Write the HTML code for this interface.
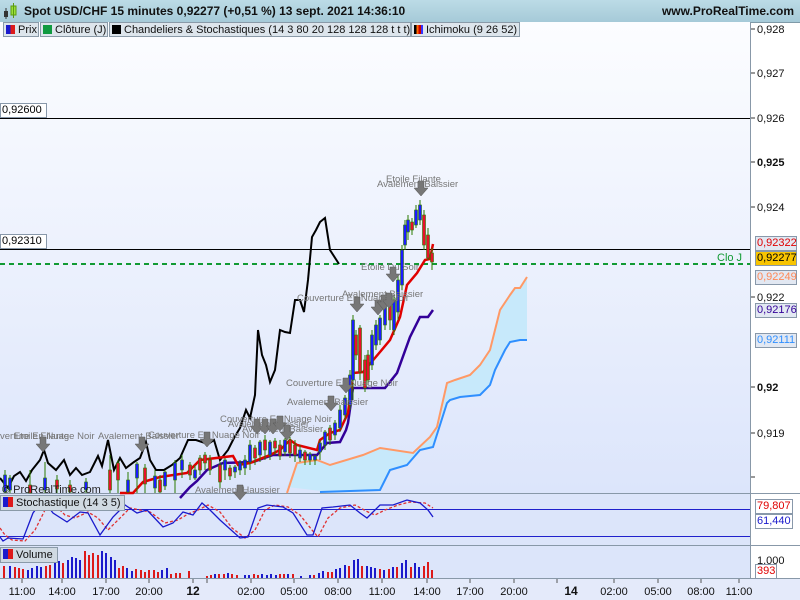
<!DOCTYPE html>
<html><head><meta charset="utf-8"><style>
body{margin:0;width:800px;height:600px;overflow:hidden;font-family:"Liberation Sans",sans-serif;background:#fff;position:relative}
.hdr{position:absolute;left:0;top:0;width:800px;height:22px;background:linear-gradient(#bcdbe6,#a6cad8);border-bottom:1px solid #7f9aa8}
.hdr .t{position:absolute;left:24px;top:4px;font-size:12px;font-weight:bold;color:#111}
.hdr .w{position:absolute;right:6px;top:4px;font-size:12px;font-weight:bold;color:#111}
.leg{position:absolute;top:22px;height:15px;background:#dde5ec;border:1px solid #8a9aa8;font-size:11px;line-height:15px;color:#111;white-space:nowrap;padding:0 3px 0 2px;box-sizing:border-box}
.sq{display:inline-block;width:9px;height:9px;vertical-align:-1px;margin-right:3px}
.bx{position:absolute;font-size:11px;line-height:13px;border:1px solid #8898aa;background:#e2e8f2;padding:0 1px;box-sizing:border-box;height:15px}
.ax{position:absolute;font-size:11px;color:#111}
</style></head><body>
<div class="hdr"><svg style="position:absolute;left:3px;top:3px" width="16" height="16"><rect x="1" y="8" width="4" height="6" fill="#333"/><line x1="3" y1="5" x2="3" y2="16" stroke="#333"/><rect x="8" y="3" width="5" height="9" fill="#9be03a" stroke="#5a9a10"/><line x1="10.5" y1="0" x2="10.5" y2="15" stroke="#5a9a10"/></svg><span class="t">Spot USD/CHF 15 minutes 0,92277 (+0,51 %) 13 sept. 2021 14:36:10</span><span class="w">www.ProRealTime.com</span></div>

<svg style="position:absolute;left:0;top:22px" width="800" height="578">
<defs><linearGradient id="bg" x1="0" y1="0" x2="0" y2="1"><stop offset="0" stop-color="#fcfdff"/><stop offset="1" stop-color="#dce5fb"/></linearGradient></defs>
<rect x="0" y="0" width="750" height="471" fill="url(#bg)"/>
<rect x="0" y="472" width="750" height="51" fill="#dce5fa"/>
<rect x="0" y="524" width="750" height="32" fill="#dce5fa"/>
<rect x="0" y="557" width="800" height="21" fill="#e4eafa"/>
<line x1="750.5" y1="0" x2="750.5" y2="557" stroke="#8898a8"/>
<line x1="0" y1="471.5" x2="800" y2="471.5" stroke="#8898a8"/>
<line x1="0" y1="523.5" x2="800" y2="523.5" stroke="#8898a8"/>
<line x1="0" y1="556.5" x2="800" y2="556.5" stroke="#8898a8"/>
</svg>

<svg style="position:absolute;left:0;top:0" width="800" height="600">
<!-- price axis ticks -->
<g stroke="#333"><line x1="751" y1="29" x2="755" y2="29"/><line x1="751" y1="73" x2="755" y2="73"/><line x1="751" y1="118" x2="755" y2="118"/><line x1="751" y1="162" x2="755" y2="162"/><line x1="751" y1="207" x2="755" y2="207"/><line x1="751" y1="297" x2="755" y2="297"/><line x1="751" y1="387" x2="755" y2="387"/><line x1="751" y1="433" x2="755" y2="433"/><line x1="751" y1="477" x2="755" y2="477"/></g>
<line x1="0" y1="118.5" x2="750" y2="118.5" stroke="#000"/>
<line x1="0" y1="249.5" x2="750" y2="249.5" stroke="#000"/>
<line x1="0" y1="264" x2="750" y2="264" stroke="#119a33" stroke-width="2" stroke-dasharray="5,4"/>
<!-- cloud -->
<polygon fill="#c7e9fb" points="287,487 297,463 317,460 330,465 363,455 380,448 413,453 430,437 437,427 447,383 455,380 470,375 480,365 490,350 495,330 500,310 510,295 515,288 520,288 527,277 527,340 520,340 510,342 505,350 500,360 495,370 490,385 480,395 460,397 450,400 447,403 433,447 420,450 407,465 390,470 380,490 330,492"/>
<polyline fill="none" stroke="#ff9966" stroke-width="2" points="287,493 297,463 317,460 330,465 363,455 380,448 413,453 430,437 437,427 447,383 455,380 470,375 480,365 490,350 495,330 500,310 510,295 515,288 520,288 527,277"/>
<polyline fill="none" stroke="#2f8fff" stroke-width="2" points="320,492 380,490 390,470 407,465 420,450 433,447 447,403 450,400 460,397 480,395 490,385 495,370 500,360 505,350 510,342 520,340 527,340"/>
<!-- black lagging -->
<polyline fill="none" stroke="#000" stroke-width="2" points="0,478 8,488 14,476 20,472 26,481 32,470 40,460 44,450 48,463 56,470 64,460 70,475 76,468 82,475 90,472 98,456 102,466 108,440 114,470 120,458 126,468 134,462 140,458 146,442 150,460 156,470 164,470 172,465 180,458 188,440 196,440 208,444 214,440 220,460 228,450 234,438 240,428 246,410 250,418 255,395 258,330 262,355 266,365 270,382 275,370 280,330 285,332 290,333 295,300 300,300 304,312 308,280 312,237 316,230 320,222 325,218 330,250 339,264"/>
<!-- purple -->
<polyline fill="none" stroke="#330099" stroke-width="2.5" points="180,498 190,487 197,481 207,470 223,463 253,462 273,455 317,455 327,443 340,442 346,430 348,423 353,388 385,388 397,373 410,337 420,317 428,317 433,310"/>
<!-- red -->
<polyline fill="none" stroke="#e00000" stroke-width="2.5" points="120,493 133,493 143,482 160,477 187,473 200,460 233,456 238,465 250,463 270,455 280,450 290,440 297,445 317,450 320,440 330,433 340,430 348,413 353,373 363,372 380,352 390,340 400,317 407,285 417,273 425,260 430,259 433,244"/>
<!-- candles -->
<g id="c" stroke="#2a7a00" stroke-width="1"></g>
<g stroke="#2a7a00">
<line x1="5" y1="470" x2="5" y2="493"/><line x1="10" y1="475" x2="10" y2="493"/><line x1="30" y1="470" x2="30" y2="493"/><line x1="45" y1="462" x2="45" y2="493"/><line x1="57" y1="475" x2="57" y2="493"/><line x1="70" y1="480" x2="70" y2="493"/><line x1="86" y1="478" x2="86" y2="493"/><line x1="110" y1="455" x2="110" y2="493"/><line x1="118" y1="460" x2="118" y2="493"/><line x1="128" y1="472" x2="128" y2="493"/><line x1="137" y1="462" x2="137" y2="493"/><line x1="145" y1="464" x2="145" y2="493"/><line x1="155" y1="470" x2="155" y2="493"/><line x1="160" y1="475" x2="160" y2="493"/><line x1="165" y1="470" x2="165" y2="490"/><line x1="175" y1="460" x2="175" y2="493"/><line x1="182" y1="455" x2="182" y2="478"/><line x1="190" y1="462" x2="190" y2="480"/><line x1="195" y1="465" x2="195" y2="480"/><line x1="200" y1="455" x2="200" y2="475"/><line x1="205" y1="452" x2="205" y2="470"/><line x1="210" y1="455" x2="210" y2="475"/><line x1="220" y1="462" x2="220" y2="488"/><line x1="225" y1="458" x2="225" y2="480"/><line x1="230" y1="465" x2="230" y2="480"/><line x1="235" y1="465" x2="235" y2="478"/><line x1="240" y1="460" x2="240" y2="475"/><line x1="245" y1="455" x2="245" y2="475"/><line x1="250" y1="440" x2="250" y2="470"/><line x1="255" y1="445" x2="255" y2="465"/><line x1="260" y1="440" x2="260" y2="462"/><line x1="265" y1="435" x2="265" y2="460"/><line x1="270" y1="440" x2="270" y2="460"/><line x1="275" y1="438" x2="275" y2="455"/><line x1="280" y1="440" x2="280" y2="460"/><line x1="285" y1="438" x2="285" y2="456"/><line x1="290" y1="437" x2="290" y2="458"/><line x1="295" y1="440" x2="295" y2="462"/><line x1="300" y1="445" x2="300" y2="462"/><line x1="305" y1="450" x2="305" y2="465"/><line x1="310" y1="452" x2="310" y2="465"/><line x1="315" y1="455" x2="315" y2="465"/><line x1="320" y1="440" x2="320" y2="460"/><line x1="325" y1="430" x2="325" y2="450"/><line x1="330" y1="425" x2="330" y2="445"/><line x1="335" y1="420" x2="335" y2="440"/><line x1="340" y1="405" x2="340" y2="432"/><line x1="345" y1="395" x2="345" y2="420"/><line x1="350" y1="370" x2="350" y2="410"/><line x1="353" y1="315" x2="353" y2="400"/><line x1="356" y1="330" x2="356" y2="360"/><line x1="360" y1="325" x2="360" y2="380"/><line x1="365" y1="355" x2="365" y2="392"/><line x1="368" y1="350" x2="368" y2="385"/><line x1="372" y1="330" x2="372" y2="370"/><line x1="376" y1="320" x2="376" y2="350"/><line x1="380" y1="315" x2="380" y2="345"/><line x1="385" y1="300" x2="385" y2="330"/><line x1="390" y1="300" x2="390" y2="330"/><line x1="394" y1="295" x2="394" y2="335"/><line x1="398" y1="275" x2="398" y2="320"/><line x1="402" y1="245" x2="402" y2="290"/><line x1="405" y1="220" x2="405" y2="250"/><line x1="408" y1="215" x2="408" y2="240"/><line x1="412" y1="218" x2="412" y2="235"/><line x1="416" y1="205" x2="416" y2="228"/><line x1="420" y1="200" x2="420" y2="225"/><line x1="424" y1="210" x2="424" y2="250"/><line x1="428" y1="228" x2="428" y2="260"/><line x1="432" y1="248" x2="432" y2="270"/>
</g>
<g fill="#1a1aff" stroke="#2a7a00" stroke-width="0.6">
<rect x="3.5" y="475" width="3" height="17"/><rect x="8.5" y="478" width="3" height="12"/><rect x="43.5" y="478" width="3" height="12"/><rect x="84.5" y="482" width="3" height="8"/><rect x="126.5" y="480" width="3" height="12"/><rect x="135.5" y="464" width="3" height="14"/><rect x="153.5" y="476" width="3" height="12"/><rect x="163.5" y="472" width="3" height="14"/><rect x="173.5" y="463" width="3" height="17"/><rect x="180.5" y="460" width="3" height="10"/><rect x="193.5" y="470" width="3" height="8"/><rect x="223.5" y="460" width="3" height="10"/><rect x="233.5" y="467" width="3" height="5"/><rect x="238.5" y="463" width="3" height="7"/><rect x="243.5" y="460" width="3" height="8"/><rect x="248.5" y="445" width="3" height="17"/><rect x="258.5" y="442" width="3" height="13"/><rect x="268.5" y="442" width="3" height="13"/><rect x="283.5" y="440" width="3" height="12"/><rect x="298.5" y="450" width="3" height="8"/><rect x="308.5" y="454" width="3" height="6"/><rect x="313.5" y="456" width="3" height="4"/><rect x="318.5" y="443" width="3" height="9"/><rect x="323.5" y="432" width="3" height="13"/><rect x="333.5" y="423" width="3" height="12"/><rect x="338.5" y="410" width="3" height="18"/><rect x="343.5" y="398" width="3" height="17"/><rect x="348.5" y="375" width="3" height="30"/><rect x="351.5" y="320" width="3" height="60"/><rect x="370.5" y="335" width="3" height="30"/><rect x="374.5" y="325" width="3" height="20"/><rect x="378.5" y="318" width="3" height="22"/><rect x="383.5" y="305" width="3" height="20"/><rect x="392.5" y="300" width="3" height="30"/><rect x="396.5" y="280" width="3" height="32"/><rect x="400.5" y="250" width="3" height="35"/><rect x="403.5" y="225" width="3" height="20"/><rect x="406.5" y="220" width="3" height="12"/><rect x="414.5" y="210" width="3" height="15"/><rect x="418.5" y="205" width="3" height="15"/>
</g>
<g fill="#e8102a" stroke="#2a7a00" stroke-width="0.6">
<rect x="28.5" y="485" width="3" height="8"/><rect x="55.5" y="480" width="3" height="9"/><rect x="68.5" y="485" width="3" height="7"/><rect x="108.5" y="470" width="3" height="20"/><rect x="116.5" y="463" width="3" height="17"/><rect x="143.5" y="468" width="3" height="16"/><rect x="158.5" y="480" width="3" height="12"/><rect x="188.5" y="465" width="3" height="10"/><rect x="198.5" y="458" width="3" height="12"/><rect x="203.5" y="455" width="3" height="8"/><rect x="208.5" y="460" width="3" height="10"/><rect x="218.5" y="465" width="3" height="17"/><rect x="228.5" y="468" width="3" height="8"/><rect x="253.5" y="448" width="3" height="10"/><rect x="263.5" y="440" width="3" height="10"/><rect x="273.5" y="441" width="3" height="7"/><rect x="278.5" y="445" width="3" height="11"/><rect x="288.5" y="440" width="3" height="13"/><rect x="293.5" y="445" width="3" height="10"/><rect x="303.5" y="452" width="3" height="8"/><rect x="328.5" y="428" width="3" height="12"/><rect x="354.5" y="335" width="3" height="20"/><rect x="358.5" y="328" width="3" height="44"/><rect x="363.5" y="360" width="3" height="28"/><rect x="366.5" y="355" width="3" height="25"/><rect x="388.5" y="305" width="3" height="15"/><rect x="410.5" y="222" width="3" height="8"/><rect x="422.5" y="215" width="3" height="30"/><rect x="426.5" y="235" width="3" height="23"/><rect x="430.5" y="253" width="3" height="9"/>
</g>
<!-- arrows -->
<g fill="#777" stroke="#555" stroke-width="0.5">
<path id="ar" d="M-3,0 h6 v7 h4 l-7,8 l-7,-8 h4z" transform="translate(43,437)"/>
<path d="M-3,0 h6 v7 h4 l-7,8 l-7,-8 h4z" transform="translate(142,437)"/>
<path d="M-3,0 h6 v7 h4 l-7,8 l-7,-8 h4z" transform="translate(207,432)"/>
<path d="M-3,0 h6 v7 h4 l-7,8 l-7,-8 h4z" transform="translate(240,485)"/>
<path d="M-3,0 h6 v7 h4 l-7,8 l-7,-8 h4z" transform="translate(257,419)"/>
<path d="M-3,0 h6 v7 h4 l-7,8 l-7,-8 h4z" transform="translate(265,419)"/>
<path d="M-3,0 h6 v7 h4 l-7,8 l-7,-8 h4z" transform="translate(273,419)"/>
<path d="M-3,0 h6 v7 h4 l-7,8 l-7,-8 h4z" transform="translate(280,416)"/>
<path d="M-3,0 h6 v7 h4 l-7,8 l-7,-8 h4z" transform="translate(287,425)"/>
<path d="M-3,0 h6 v7 h4 l-7,8 l-7,-8 h4z" transform="translate(331,396)"/>
<path d="M-3,0 h6 v7 h4 l-7,8 l-7,-8 h4z" transform="translate(346,378)"/>
<path d="M-3,0 h6 v7 h4 l-7,8 l-7,-8 h4z" transform="translate(357,297)"/>
<path d="M-3,0 h6 v7 h4 l-7,8 l-7,-8 h4z" transform="translate(378,300)"/>
<path d="M-3,0 h6 v7 h4 l-7,8 l-7,-8 h4z" transform="translate(384,295)"/>
<path d="M-3,0 h6 v7 h4 l-7,8 l-7,-8 h4z" transform="translate(389,293)"/>
<path d="M-3,0 h6 v7 h4 l-7,8 l-7,-8 h4z" transform="translate(393,267)"/>
<path d="M-3,0 h6 v7 h4 l-7,8 l-7,-8 h4z" transform="translate(421,181)"/>
</g>
<g font-size="9.5" fill="#777" font-family="Liberation Sans,sans-serif">
<text x="0" y="439">verture En Nuage Noir</text><text x="14" y="439">Etoile Filante</text><text x="98" y="439">Avalement Baissier</text>
<text x="148" y="438">Couverture En Nuage Noir</text>
<text x="220" y="422">Couverture En Nuage Noir</text><text x="228" y="427">Avalement Baissier</text><text x="242" y="432">Avalement Baissier</text>
<text x="195" y="493">Avalement Haussier</text>
<text x="286" y="386">Couverture En Nuage Noir</text><text x="287" y="405">Avalement Baissier</text>
<text x="297" y="301">Couverture En Nuage Noir</text><text x="342" y="297">Avalement Baissier</text>
<text x="361" y="270">Etoile Du Soir</text>
<text x="386" y="182">Etoile Filante</text><text x="377" y="187">Avalement Baissier</text>
</g>
<text x="717" y="261" font-size="11" fill="#119a33" font-family="Liberation Sans,sans-serif">Clo J</text>
<text x="2" y="493" font-size="11" fill="#222" font-family="Liberation Sans,sans-serif">© ProRealTime.com</text>
<!-- stochastic -->
<line x1="0" y1="509.5" x2="750" y2="509.5" stroke="#2020cc"/>
<line x1="0" y1="536.5" x2="750" y2="536.5" stroke="#2020cc"/>
<polyline fill="none" stroke="#e03030" stroke-width="1.3" stroke-dasharray="3,2" points="0,528 5,535 12,540 25,541 35,530 45,510 55,505 65,515 75,518 88,512 98,518 108,530 118,520 130,508 140,510 150,512 165,523 178,520 188,514 198,510 208,505 220,512 232,528 245,538 255,530 265,510 275,505 288,507 300,515 312,530 318,537 328,518 340,508 355,505 368,512 375,515 385,510 398,505 410,502 425,503 433,508"/>
<polyline fill="none" stroke="#1a1acc" stroke-width="1.3" points="0,537 3,541 8,538 23,539 33,513 43,500 53,513 67,522 80,512 88,513 100,535 113,517 125,505 137,513 147,510 163,527 173,523 183,512 193,515 202,503 210,510 220,520 240,538 248,537 258,508 267,505 283,507 293,513 307,535 313,535 322,508 333,507 350,505 360,513 367,518 380,505 393,505 407,500 420,503 428,510 433,517"/>
<!-- volume -->
<g id="vol"></g>
<g fill="#1a1acc">
<rect x="9" y="566" width="2" height="12"/><rect x="27" y="570" width="2" height="8"/><rect x="31" y="568" width="2" height="10"/><rect x="36" y="566" width="2" height="12"/><rect x="40" y="567" width="2" height="11"/><rect x="54" y="562" width="2" height="16"/><rect x="58" y="561" width="2" height="17"/><rect x="67" y="560" width="2" height="18"/><rect x="71" y="557" width="2" height="21"/><rect x="75" y="558" width="2" height="20"/><rect x="79" y="560" width="2" height="18"/><rect x="101" y="551" width="2" height="27"/><rect x="105" y="553" width="2" height="25"/><rect x="110" y="557" width="2" height="21"/><rect x="114" y="560" width="2" height="18"/><rect x="126" y="568" width="2" height="10"/><rect x="131" y="571" width="2" height="7"/><rect x="161" y="570" width="2" height="8"/><rect x="166" y="568" width="2" height="10"/><rect x="214" y="574" width="2" height="4"/><rect x="227" y="573" width="2" height="5"/><rect x="244" y="575" width="2" height="3"/><rect x="248" y="575" width="2" height="3"/><rect x="261" y="574" width="2" height="4"/><rect x="266" y="575" width="2" height="3"/><rect x="270" y="574" width="2" height="4"/><rect x="275" y="575" width="2" height="3"/><rect x="287" y="574" width="2" height="4"/><rect x="300" y="576" width="2" height="2"/><rect x="309" y="575" width="2" height="3"/><rect x="318" y="573" width="2" height="5"/><rect x="322" y="571" width="2" height="7"/><rect x="335" y="569" width="2" height="9"/><rect x="339" y="568" width="2" height="10"/><rect x="344" y="565" width="2" height="13"/><rect x="353" y="560" width="2" height="18"/><rect x="357" y="559" width="2" height="19"/><rect x="366" y="566" width="2" height="12"/><rect x="370" y="567" width="2" height="11"/><rect x="374" y="568" width="2" height="10"/><rect x="383" y="570" width="2" height="8"/><rect x="392" y="567" width="2" height="11"/><rect x="401" y="563" width="2" height="15"/><rect x="405" y="560" width="2" height="18"/><rect x="414" y="563" width="2" height="15"/><rect x="418" y="567" width="2" height="11"/></g>
<g fill="#dd1a1a">
<rect x="3" y="566" width="2" height="12"/><rect x="14" y="567" width="2" height="11"/><rect x="18" y="568" width="2" height="10"/><rect x="22" y="569" width="2" height="9"/><rect x="45" y="566" width="2" height="12"/><rect x="49" y="565" width="2" height="13"/><rect x="62" y="563" width="2" height="15"/><rect x="84" y="551" width="2" height="27"/><rect x="88" y="555" width="2" height="23"/><rect x="92" y="553" width="2" height="25"/><rect x="97" y="555" width="2" height="23"/><rect x="118" y="568" width="2" height="10"/><rect x="122" y="566" width="2" height="12"/><rect x="135" y="569" width="2" height="9"/><rect x="140" y="570" width="2" height="8"/><rect x="144" y="572" width="2" height="6"/><rect x="148" y="570" width="2" height="8"/><rect x="153" y="570" width="2" height="8"/><rect x="157" y="572" width="2" height="6"/><rect x="170" y="574" width="2" height="4"/><rect x="175" y="573" width="2" height="5"/><rect x="179" y="573" width="2" height="5"/><rect x="188" y="571" width="2" height="7"/><rect x="206" y="576" width="2" height="2"/><rect x="210" y="575" width="2" height="3"/><rect x="218" y="574" width="2" height="4"/><rect x="223" y="574" width="2" height="4"/><rect x="231" y="574" width="2" height="4"/><rect x="236" y="575" width="2" height="3"/><rect x="253" y="574" width="2" height="4"/><rect x="257" y="575" width="2" height="3"/><rect x="279" y="574" width="2" height="4"/><rect x="283" y="574" width="2" height="4"/><rect x="292" y="574" width="2" height="4"/><rect x="313" y="575" width="2" height="3"/><rect x="327" y="572" width="2" height="6"/><rect x="331" y="572" width="2" height="6"/><rect x="348" y="566" width="2" height="12"/><rect x="361" y="566" width="2" height="12"/><rect x="379" y="569" width="2" height="9"/><rect x="388" y="569" width="2" height="9"/><rect x="396" y="567" width="2" height="11"/><rect x="410" y="567" width="2" height="11"/><rect x="423" y="566" width="2" height="12"/><rect x="427" y="562" width="2" height="16"/><rect x="431" y="570" width="2" height="8"/></g>
<!-- time ticks -->
<g stroke="#555"><line x1="22" y1="579" x2="22" y2="583"/><line x1="62" y1="579" x2="62" y2="583"/><line x1="106" y1="579" x2="106" y2="583"/><line x1="149" y1="579" x2="149" y2="583"/><line x1="193" y1="579" x2="193" y2="583"/><line x1="207" y1="579" x2="207" y2="583"/><line x1="251" y1="579" x2="251" y2="583"/><line x1="294" y1="579" x2="294" y2="583"/><line x1="338" y1="579" x2="338" y2="583"/><line x1="382" y1="579" x2="382" y2="583"/><line x1="427" y1="579" x2="427" y2="583"/><line x1="470" y1="579" x2="470" y2="583"/><line x1="514" y1="579" x2="514" y2="583"/><line x1="557" y1="579" x2="557" y2="583"/><line x1="614" y1="579" x2="614" y2="583"/><line x1="658" y1="579" x2="658" y2="583"/><line x1="701" y1="579" x2="701" y2="583"/><line x1="739" y1="579" x2="739" y2="583"/></g>
<g font-size="11" fill="#111" font-family="Liberation Sans,sans-serif" text-anchor="middle">
<text x="22" y="595">11:00</text><text x="62" y="595">14:00</text><text x="106" y="595">17:00</text><text x="149" y="595">20:00</text><text x="193" y="595" font-weight="bold" font-size="12">12</text><text x="251" y="595">02:00</text><text x="294" y="595">05:00</text><text x="338" y="595">08:00</text><text x="382" y="595">11:00</text><text x="427" y="595">14:00</text><text x="470" y="595">17:00</text><text x="514" y="595">20:00</text><text x="571" y="595" font-weight="bold" font-size="12">14</text><text x="614" y="595">02:00</text><text x="658" y="595">05:00</text><text x="701" y="595">08:00</text><text x="739" y="595">11:00</text></g>
<g font-size="11" fill="#111" font-family="Liberation Sans,sans-serif">
<text x="757" y="33">0,928</text><text x="757" y="77">0,927</text><text x="757" y="122">0,926</text><text x="757" y="166" font-weight="bold">0,925</text><text x="757" y="211">0,924</text><text x="757" y="301">0,922</text><text x="757" y="391" font-weight="bold">0,92</text><text x="757" y="437">0,919</text><text x="757" y="564">1,000</text></g>
</svg>

<div class="leg" style="left:3px;width:36px"><span class="sq" style="background:linear-gradient(90deg,#1a1acc 50%,#dd1a1a 50%)"></span>Prix</div>
<div class="leg" style="left:40px;width:68px"><span class="sq" style="background:#109a40"></span>Clôture (J)</div>
<div class="leg" style="left:109px;width:302px"><span class="sq" style="background:#000"></span>Chandeliers &amp; Stochastiques (14 3 80 20 128 128 128 t t t)</div>
<div class="leg" style="left:411px;width:109px"><span class="sq" style="background:linear-gradient(90deg,#000 25%,#f60 25%,#f60 50%,#c00 50%,#c00 75%,#33f 75%)"></span>Ichimoku (9 26 52)</div>

<div class="bx" style="left:0;top:103px;width:47px;background:#fff;color:#000">0,92600</div>
<div class="bx" style="left:0;top:234px;width:47px;background:#fff;color:#000">0,92310</div>
<div class="bx" style="left:755px;top:236px;width:42px;color:#e00000">0,92322</div>
<div class="bx" style="left:755px;top:251px;width:42px;color:#000;background:#f8c400">0,92277</div>
<div class="bx" style="left:755px;top:270px;width:42px;color:#ff8855">0,92249</div>
<div class="bx" style="left:755px;top:303px;width:42px;color:#330099">0,92176</div>
<div class="bx" style="left:755px;top:333px;width:42px;color:#2f8fff">0,92111</div>
<div class="bx" style="left:755px;top:499px;width:38px;color:#e00000;background:#fff">79,807</div>
<div class="bx" style="left:755px;top:514px;width:38px;color:#1a1acc;background:#fff">61,440</div>
<div class="bx" style="left:755px;top:564px;width:22px;color:#e00000;background:#fff">393</div>

<div class="leg" style="left:0;top:495px;width:125px;height:16px;background:#d0dae2"><span class="sq" style="background:linear-gradient(90deg,#1a1acc 50%,#dd1a1a 50%);width:10px;height:10px"></span>Stochastique (14 3 5)</div>
<div class="leg" style="left:0;top:547px;width:58px;height:16px;background:#d0dae2"><span class="sq" style="background:linear-gradient(90deg,#1a1acc 50%,#dd1a1a 50%);width:10px;height:10px"></span>Volume</div>
</body></html>
